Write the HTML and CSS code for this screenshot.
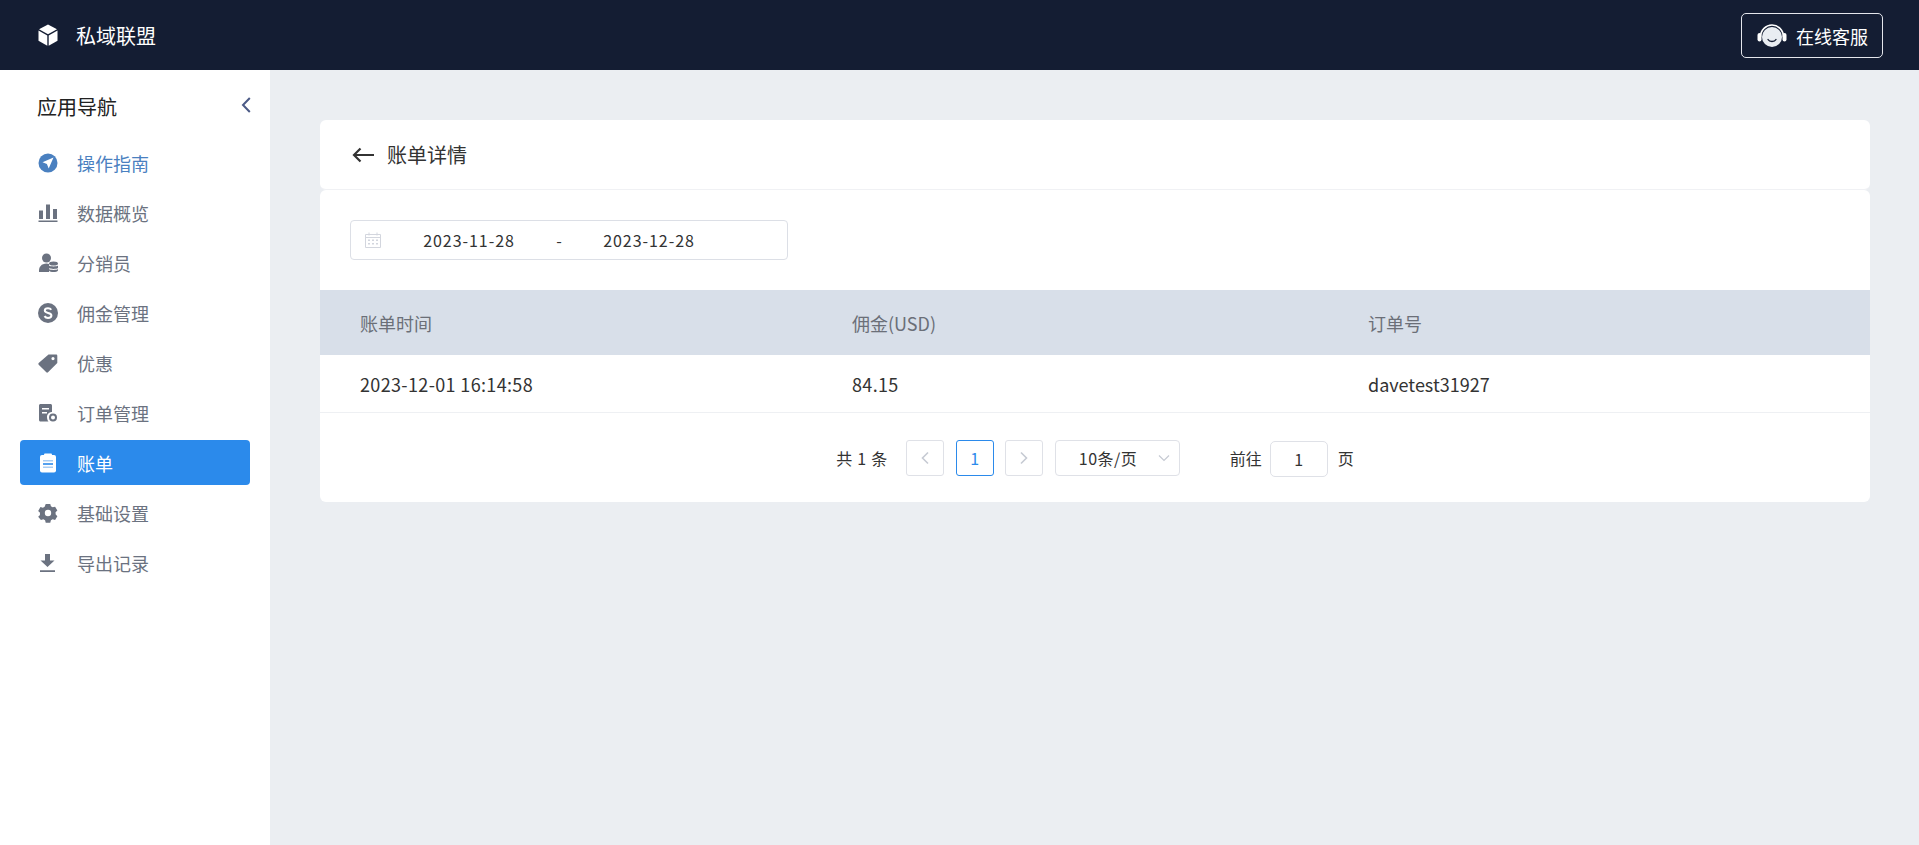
FILE: index.html
```html
<!DOCTYPE html>
<html lang="zh-CN">
<head>
    <meta charset="UTF-8">
    <meta name="viewport" content="width=device-width, initial-scale=1.0">
    <title>账单详情</title>
    <link rel="stylesheet" href="styles.css">
</head>
<body>
    <header class="topbar">
        <div class="brand">
            <svg class="brand-icon" viewBox="0 0 20 22">
                <path fill="#fff" d="M10 0.500l9 4.800-9 5-9-5z"/>
                <path fill="#fff" d="M0.500 6.600l8.800 4.900v10.200L0.500 16.800z"/>
                <path fill="#fff" d="M19.500 6.600l-8.800 4.900v10.200l8.800-4.900z"/>
            </svg>
            <span>私域联盟</span>
        </div>
        <button class="service">
            <svg class="service-icon" viewBox="0 0 30 24">
                <path fill="none" stroke="#fff" stroke-width="1.600" d="M3.500 13C3.500 6 9 1 15 1s11.500 5 11.500 12"/>
                <rect fill="#fff" x="0.500" y="9" width="4" height="8.500" rx="2"/>
                <rect fill="#fff" x="25.500" y="9" width="4" height="8.500" rx="2"/>
                <circle fill="#e9edf2" cx="15" cy="13" r="10"/>
                <path fill="none" stroke="#141d33" stroke-width="1.400" stroke-linecap="round" d="M11 15.500c1.500 2.600 6.500 2.600 8 0"/>
            </svg>
            <span>在线客服</span>
        </button>
    </header>

    <div class="layout">
        <aside class="sidebar">
            <div class="side-title">
                <span>应用导航</span>
                <svg class="collapse" viewBox="0 0 10 16"><path fill="none" stroke="#4b5a86" stroke-width="2" d="M8.800 1L2 8l6.800 7"/></svg>
            </div>
            <nav class="menu">
                <a class="menu-item guide">
                    <svg viewBox="0 0 20 20"><circle fill="#4a80c0" cx="10" cy="10" r="9.500"/><path fill="#fff" d="M15.500 4.500L4.500 9.300l4.400 1.800 1.800 4.400z"/></svg>
                    <span>操作指南</span>
                </a>
                <a class="menu-item">
                    <svg viewBox="0 0 20 20"><path fill="#6b7280" d="M1 7.500h4V16H1zM8 1.500h4V16H8zM15 6h4v10h-4zM0.500 17.500h19V19H0.500z"/></svg>
                    <span>数据概览</span>
                </a>
                <a class="menu-item">
                    <svg viewBox="0 0 20 20"><circle fill="#6b7280" cx="8.500" cy="5" r="4.500"/><path fill="#6b7280" d="M1 19c-.5-5 2.500-8.500 7.500-8.500 1 0 2 .2 2.500.5v8z"/><ellipse fill="#6b7280" cx="15.500" cy="10.500" rx="4.500" ry="2"/><path fill="#6b7280" d="M11 12.500c1 1.200 8 1.200 9 0V15c-1 1.200-8 1.200-9 0zM11 16c1 1.200 8 1.200 9 0v1.500c-1 2-8 2-9 0z"/></svg>
                    <span>分销员</span>
                </a>
                <a class="menu-item">
                    <svg viewBox="0 0 20 20"><circle fill="#6b7280" cx="10" cy="10" r="10"/><path fill="none" stroke="#fff" stroke-width="2" d="M13.300 6.800C12.500 5.600 11.300 5.200 10 5.200c-1.800 0-3.200.9-3.200 2.400 0 3.400 6.600 1.500 6.600 4.900 0 1.500-1.500 2.400-3.400 2.400-1.400 0-2.700-.6-3.500-1.800"/></svg>
                    <span>佣金管理</span>
                </a>
                <a class="menu-item">
                    <svg viewBox="0 0 20 20"><path fill="#6b7280" fill-rule="evenodd" d="M10.500 1.500H18c.8 0 1.300.5 1.300 1.300V10L10 19.300c-.5.500-1.200.5-1.700 0L.7 11.700c-.5-.5-.5-1.200 0-1.700zM15 4a1.500 1.500 0 1 0 0 3.200A1.500 1.500 0 0 0 15 4z"/></svg>
                    <span>优惠</span>
                </a>
                <a class="menu-item">
                    <svg viewBox="0 0 20 20"><path fill="#6b7280" fill-rule="evenodd" d="M2.500 1h10c.8 0 1.500.7 1.500 1.500V9c-2.800 0-5 2.200-5 5 0 1.800.5 3.500 1.500 4.500h-8C1.700 18.500 1 17.800 1 17V2.500C1 1.700 1.700 1 2.500 1zM4 5v1.600h7V5zm0 4v1.600h5V9z"/><circle fill="none" stroke="#6b7280" stroke-width="2" cx="15" cy="14.500" r="3"/></svg>
                    <span>订单管理</span>
                </a>
                <a class="menu-item active">
                    <svg viewBox="0 0 20 20"><rect fill="#fff" x="2" y="2" width="16" height="17.500" rx="2"/><rect fill="#fff" x="6" y="0.500" width="8" height="3" rx="1"/><path fill="#a9cdf3" d="M5 7h10v1.600H5zM5 13.500h10v1.600H5z"/><path fill="#2b8aeb" d="M5 10.200h10v1.600H5z"/></svg>
                    <span>账单</span>
                </a>
                <a class="menu-item">
                    <svg viewBox="0 0 22 22"><path fill="#6b7280" fill-rule="evenodd" d="M8.500 1h5l.7 2.700 1.900 1.100 2.700-.8 2.500 4.300-2 2 .1 1.100-.1 1.100 2 2-2.500 4.300-2.700-.8-1.900 1.100-.7 2.700h-5l-.7-2.700-1.900-1.100-2.700.8L.2 15.200l2-2-.1-1.200.1-1.200-2-2L2.700 4.500l2.700.8 1.900-1.100zM11 7.500a3.500 3.500 0 1 0 0 7 3.500 3.500 0 0 0 0-7z"/></svg>
                    <span>基础设置</span>
                </a>
                <a class="menu-item">
                    <svg viewBox="0 0 20 20"><path fill="#6b7280" d="M7 1h5v6.500h4.500L9.500 14 2.500 7.500H7zM2 17.300h15V19H2z"/></svg>
                    <span>导出记录</span>
                </a>
            </nav>
        </aside>

        <main class="content">
            <section class="card page-head">
                <svg class="back" viewBox="0 0 22 16"><path fill="none" stroke="#333" stroke-width="2.200" d="M22 8H2M8.500 1.500L2 8l6.500 6.500"/></svg>
                <span>账单详情</span>
            </section>
            <section class="card page-body">
                <div class="filter">
                    <div class="date-range">
                        <svg class="calendar" viewBox="0 0 16 16"><path fill="none" stroke="#d3d6de" d="M.5 2.500h15v13H.5zM.5 5.500h15M4 .5v3M12 .5v3"/><path fill="#d3d6de" d="M3 7.500h2v1.500H3zM7 7.500h2v1.500H7zM11 7.500h2v1.500h-2zM3 11h2v1.500H3zM7 11h2v1.500H7zM11 11h2v1.500h-2z"/></svg>
                        <span class="date-val">2023-11-28</span>
                        <span class="date-sep">-</span>
                        <span class="date-val">2023-12-28</span>
                    </div>
                </div>
                <div class="table">
                    <div class="row head">
                        <div class="c1">账单时间</div>
                        <div class="c2">佣金(USD)</div>
                        <div class="c3">订单号</div>
                    </div>
                    <div class="row">
                        <div class="c1 num">2023-12-01 16:14:58</div>
                        <div class="c2 num">84.15</div>
                        <div class="c3">davetest31927</div>
                    </div>
                </div>
                <div class="pager">
                    <span class="total">共 1 条</span>
                    <button class="pg"><svg viewBox="0 0 10 14"><path fill="none" stroke="#c6cad3" stroke-width="1.600" d="M8 1.500L2.500 7 8 12.500"/></svg></button>
                    <button class="pg current">1</button>
                    <button class="pg"><svg viewBox="0 0 10 14"><path fill="none" stroke="#c6cad3" stroke-width="1.600" d="M2 1.500L7.500 7 2 12.500"/></svg></button>
                    <div class="size">
                        <span>10条/页</span>
                        <svg viewBox="0 0 12 8"><path fill="none" stroke="#c6cad3" stroke-width="1.200" d="M1 1.500l5 5 5-5"/></svg>
                    </div>
                    <span class="goto">前往</span>
                    <div class="jump">1</div>
                    <span>页</span>
                </div>
            </section>
        </main>
    </div>
</body>
</html>
```

FILE: styles.css
```css
* {
    box-sizing: border-box;
}
body {
    margin: 0;
    height: 845px;
    overflow: hidden;
    background-color: #ebeef2;
    color: #333;
    font-family: "Noto Sans CJK SC", "Noto Sans", sans-serif;
    font-size: 16px;
}
.topbar {
    height: 70px;
    background-color: #141d33;
    color: #fff;
    display: flex;
    justify-content: space-between;
    align-items: center;
    padding: 0 36px 0 38px;
}
.brand {
    display: flex;
    align-items: center;
    gap: 18px;
    font-size: 20px;
}
.brand-icon {
    width: 20px;
    height: 22px;
}
.service {
    width: 142px;
    height: 45px;
    margin-top: 1px;
    border: 1px solid #e4e6ec;
    border-radius: 5px;
    background: none;
    color: #fff;
    font: inherit;
    font-size: 18px;
    display: flex;
    align-items: center;
    gap: 9px;
    padding: 0 0 0 15px;
}
.service-icon {
    width: 30px;
    height: 24px;
}
.layout {
    display: flex;
    height: 775px;
}
.sidebar {
    width: 270px;
    background-color: #fff;
    padding: 0 20px;
}
.side-title {
    display: flex;
    justify-content: space-between;
    align-items: center;
    height: 70px;
    padding: 3px 0 0 17px;
    font-size: 20px;
    color: #222;
}
.collapse {
    width: 10px;
    height: 16px;
    margin: 0 -1px 3px 0;
}
.menu {
    display: flex;
    flex-direction: column;
    gap: 5px;
}
.menu-item {
    height: 45px;
    display: flex;
    align-items: center;
    gap: 19px;
    padding-left: 18px;
    border-radius: 4px;
    font-size: 18px;
    color: #6b7280;
}
.menu-item svg {
    width: 20px;
    height: 20px;
    flex: none;
}
.menu-item.guide {
    color: #4a80c0;
}
.menu-item.active {
    background-color: #2b8aeb;
    color: #fff;
}
.content {
    flex: 1;
    padding: 50px 49px 0 50px;
}
.card {
    background-color: #fff;
    border-radius: 6px;
}
.page-head {
    height: 70px;
    display: flex;
    align-items: center;
    gap: 13px;
    padding-left: 32px;
    font-size: 20px;
    border-bottom: 1px solid #f0f1f4;
}
.back {
    width: 22px;
    height: 16px;
}
.page-body {
    height: 312px;
}
.filter {
    padding: 30px;
    height: 100px;
}
.date-range {
    width: 438px;
    height: 40px;
    border: 1px solid #dcdfe6;
    border-radius: 4px;
    display: flex;
    align-items: center;
    padding-left: 14px;
}
.calendar {
    width: 16px;
    height: 16px;
    margin-right: 42px;
}
.date-val {
    width: 92px;
    text-align: center;
    white-space: nowrap;
    letter-spacing: 0.950px;
}
.date-sep {
    width: 88px;
    text-align: center;
}
.table {
    font-size: 18px;
}
.row {
    display: flex;
    align-items: center;
    height: 58px;
    border-bottom: 1px solid #eef0f3;
}
.row.head {
    height: 65px;
    background-color: #d8dfe9;
    color: #6b6f78;
    border-bottom: 0;
}
.c1 {
    width: 532px;
    padding-left: 40px;
}
.c2 {
    width: 516px;
}
.c3 {
    flex: 1;
}
.num {
    letter-spacing: 0.350px;
}
.pager {
    display: flex;
    align-items: center;
    justify-content: center;
    height: 89px;
}
.total {
    margin-right: 19px;
    word-spacing: 1.500px;
}
.pg {
    width: 38px;
    height: 36px;
    border: 1px solid #dfe1e7;
    border-radius: 3px;
    background: #fff;
    padding: 0;
    margin-right: 11.500px;
    font: inherit;
    display: flex;
    align-items: center;
    justify-content: center;
}
.pg svg {
    width: 10px;
    height: 14px;
}
.pg.current {
    border-color: #2b8aeb;
    color: #2b8aeb;
}
.size {
    width: 125px;
    height: 36px;
    border: 1px solid #dfe1e7;
    border-radius: 4px;
    display: flex;
    align-items: center;
    justify-content: space-between;
    padding: 0 9px 0 23px;
    margin-right: 50px;
    letter-spacing: 0.500px;
}
.size svg {
    width: 12px;
    height: 8px;
}
.goto {
    margin-right: 8px;
}
.jump {
    width: 58px;
    height: 36px;
    margin: 2px 10px 0 0;
    border: 1px solid #dfe1e7;
    border-radius: 5px;
    display: flex;
    align-items: center;
    justify-content: center;
}
```
